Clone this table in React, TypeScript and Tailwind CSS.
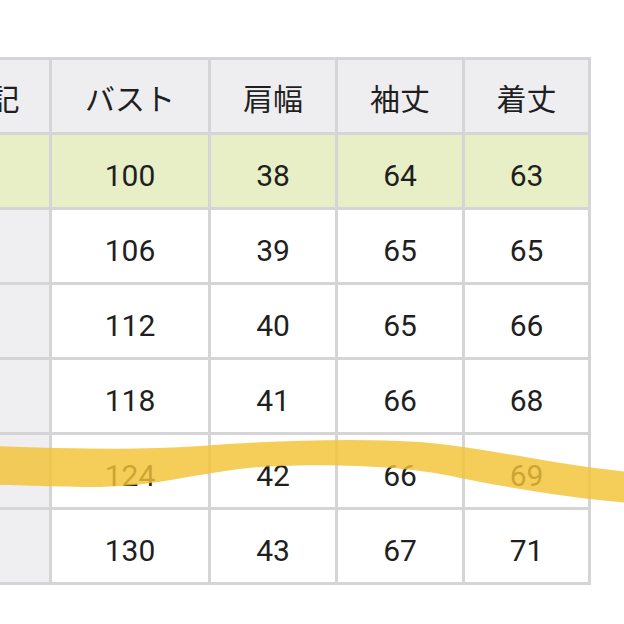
const header = ["表記", "バスト", "肩幅", "袖丈", "着丈"];

const rows = [
    ["S", "100", "38", "64", "63"],
    ["M", "106", "39", "65", "65"],
    ["L", "112", "40", "65", "66"],
    ["XL", "118", "41", "66", "68"],
    ["2XL", "124", "42", "66", "69"],
    ["3XL", "130", "43", "67", "71"],
];

export default function App() {
    return (
        <div className="relative w-[624px] h-[624px] overflow-hidden bg-white text-[#1f1f1f] font-['Roboto','Noto_Sans_CJK_JP',sans-serif]">
            <div className="pt-[57px] -ml-[73px]">
                <div className="grid w-fit grid-cols-[119px_156px_124px_124px_123px] auto-rows-[72px] gap-[3px] p-[3px] bg-[#d5d5d7]">
                    {header.map((h) => (
                        <div key={h} className="flex items-center justify-center pt-[3px] bg-[#eeeef0] text-[30px] font-['Noto_Sans_CJK_JP',sans-serif]">
                            {h}
                        </div>
                    ))}
                    {rows.map((r, i) =>
                        r.map((c, j) => (
                            <div
                                key={i + "-" + j}
                                className={`flex items-center justify-center pt-[8px] text-[30px] ${
                                    i === 0 ? "bg-[#e8eec6]" : j === 0 ? "bg-[#efeff1]" : "bg-white"
                                }`}>
                                {j === 0 ? "" : c}
                            </div>
                        ))
                    )}
                </div>
            </div>

            {/* highlighter stroke over the 124 row */}
            <svg className="absolute inset-0 pointer-events-none" width="624" height="624" viewBox="0 0 624 624">
                <path
                    d="M-5 446 C 60 448, 130 451, 200 446 C 280 440, 360 438, 420 442 C 490 448, 560 466, 630 472 L 630 503 C 570 498, 510 488, 460 478 C 410 466, 330 463, 260 467 C 200 472, 160 486, 100 487 C 50 487, 20 485, -5 485 Z"
                    fill="#f3c235"
                    opacity="0.82"
                />
            </svg>
        </div>
    );
}
